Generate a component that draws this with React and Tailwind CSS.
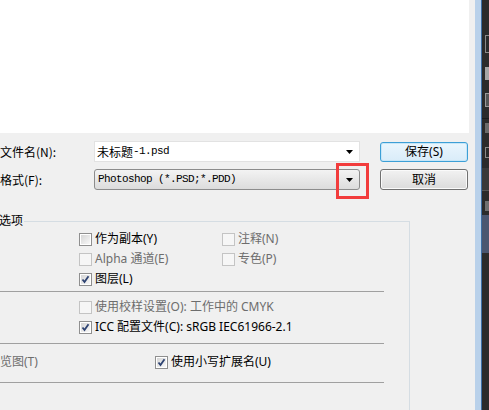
import React from 'react';

// 复选框：enabled / disabled / checked
const Box = ({ checked, disabled }) => (
  <span
    className={`w-[13px] h-[13px] shrink-0 border p-px ${
      disabled ? 'border-[#c4c4c4] bg-[#f6f6f6]' : 'border-[#8f8f8f] bg-white'
    }`}
  >
    <span
      className={`block w-full h-full relative ${
        disabled ? 'bg-[#f6f6f6]' : 'bg-gradient-to-br from-[#d6d6d6] to-[#f8f8f8]'
      }`}
    >
      {checked && (
        <svg width="9" height="9" viewBox="0 0 9 9" className="absolute left-0 top-0">
          <path d="M1.5 4.5 L3.5 7 L7.5 1.2" fill="none" stroke="#2e4372" strokeWidth="1.8" />
        </svg>
      )}
    </span>
  </span>
);

const Check = ({ label, checked, disabled, className = '' }) => (
  <div className={`flex items-center h-[20px] ${className}`}>
    <Box checked={checked} disabled={disabled} />
    <span className={`ml-[3px] text-[12px] leading-none whitespace-nowrap ${disabled ? 'text-[#6d6d6d]' : 'text-black'}`}>
      {label}
    </span>
  </div>
);

const Caret = () => (
  <svg width="7" height="4" viewBox="0 0 7 4">
    <path d="M0 0 H7 L3.5 4 Z" fill="#000" />
  </svg>
);

export default function App() {
  return (
    <div className="w-[489px] h-[410px] flex overflow-hidden bg-[#f0f0f0] font-['Noto_Sans','Noto_Sans_CJK_SC',sans-serif]">
      {/* 对话框主体 */}
      <div className="w-[475px] flex flex-col relative">
        <div className="w-[469px] h-[133px] bg-white" />

        {/* 文件名 */}
        <div className="flex items-center h-[21px] mt-[8px]">
          <span className="w-[94px] text-[12px] leading-none font-['Noto_Sans_CJK_SC',sans-serif]">文件名(N):</span>
          <div className="w-[266px] h-[21px] bg-white border border-[#e2e2e2] flex items-center pl-[2px] pr-[6px]">
            <span className="text-[12px] leading-none font-['Noto_Sans_CJK_SC',sans-serif]">未标题</span>
            <span className="text-[11px] tracking-[-0.6px] leading-none font-['Liberation_Mono',monospace]">-1.psd</span>
            <span className="ml-auto"><Caret /></span>
          </div>
          <button className="ml-[20px] w-[88px] h-[20px] mt-[1px] rounded-[3px] border border-[#3c9fd6] bg-gradient-to-b from-[#eaf6fd] to-[#d9ecf9] text-[12px] leading-none shadow-[inset_0_0_0_1px_#c6e6f8]">
            保存(S)
          </button>
        </div>

        {/* 格式 */}
        <div className="flex items-center h-[21px] mt-[7px]">
          <span className="w-[94px] text-[12px] leading-none font-['Noto_Sans_CJK_SC',sans-serif]">格式(F):</span>
          <div className="w-[266px] h-[21px] rounded-[3px] border border-[#8c8c8c] bg-gradient-to-b from-[#f3f3f3] to-[#dcdcdc] flex items-center pl-[3px] pr-[6px]">
            <span className="text-[11px] tracking-[-0.6px] leading-none font-['Liberation_Mono',monospace]">Photoshop (*.PSD;*.PDD)</span>
            <span className="ml-auto"><Caret /></span>
          </div>
          <button className="ml-[20px] w-[88px] h-[21px] rounded-[3px] border border-[#707070] bg-gradient-to-b from-[#f2f2f2] to-[#dbdbdb] text-[12px] leading-none shadow-[inset_0_0_0_1px_#fafafa]">
            取消
          </button>
        </div>

        {/* 标注框 */}
        <div className="absolute left-[336px] top-[163px] w-[33px] h-[36px] border-[3px] border-[#f23c3c]" />

        {/* 选项 */}
        <fieldset className="mt-[25px] w-[410px] border-t border-r border-[#d5dde3] flex-1 min-h-0">
          <legend className="text-[12px] leading-[12px] -ml-[1px] pr-[1px]">选项</legend>

          <div className="flex mt-[2px]">
            <div className="w-[222px] shrink-0 pl-[79px] flex flex-col">
              <Check label="作为副本(Y)" />
              <Check label="Alpha 通道(E)" disabled />
              <Check label="图层(L)" checked className="h-[19px]" />
            </div>
            <div className="flex flex-col">
              <Check label="注释(N)" disabled />
              <Check label="专色(P)" disabled />
            </div>
          </div>

          <div className="h-px w-[384px] bg-[#a0a0a0] mt-[2px]" />

          <div className="pl-[79px] flex flex-col mt-[5px]">
            <Check label="使用校样设置(O):  工作中的 CMYK" disabled />
            <Check label="ICC 配置文件(C):  sRGB IEC61966-2.1" checked />
          </div>

          <div className="h-px w-[384px] bg-[#a0a0a0] mt-[6px]" />

          <div className="flex items-center h-[20px] mt-[8px]">
            <span className="w-[155px] text-[12px] leading-none text-[#6d6d6d]">览图(T)</span>
            <Check label="使用小写扩展名(U)" checked />
          </div>

          <div className="h-px w-[384px] bg-[#a0a0a0] mt-[10px]" />
        </fieldset>
      </div>

      {/* 窗口边框 */}
      <div className="w-[7px] bg-[#b9d1ea] border-r border-[#3b6ea5]" />

      {/* 右侧深色面板 */}
      <div className="w-[7px] bg-[#2b2b2b] flex flex-col pl-[3px]">
        <div className="mt-[35px] w-[4px] h-[18px] border border-[#8a8a8a] border-r-0" />
        <div className="mt-[14px] w-[4px] h-[13px] bg-[#a5a5a5]" />
        <div className="mt-[13px] w-[4px] h-[14px] border border-[#9a9a9a] border-r-0 bg-[#555]" />
        <div className="mt-[11px] -ml-[3px] w-[7px] h-px bg-[#1b1b1b]" />
        <div className="mt-[4px] w-[4px] h-[10px] bg-[#6b6b6b]" />
        <div className="mt-[14px] w-[4px] h-[11px] border border-[#8a8a8a] border-r-0" />
        <div className="mt-[10px] -ml-[3px] w-[7px] h-[22px] bg-[#3a3a3a]" />
        <div className="-ml-[3px] w-[7px] h-px bg-[#555]" />
        <div className="mt-[10px] w-[4px] h-[10px] bg-[#707070]" />
        <div className="mt-[4px] -ml-[3px] w-[7px] h-[38px] bg-[#4a5670]" />
      </div>
    </div>
  );
}
